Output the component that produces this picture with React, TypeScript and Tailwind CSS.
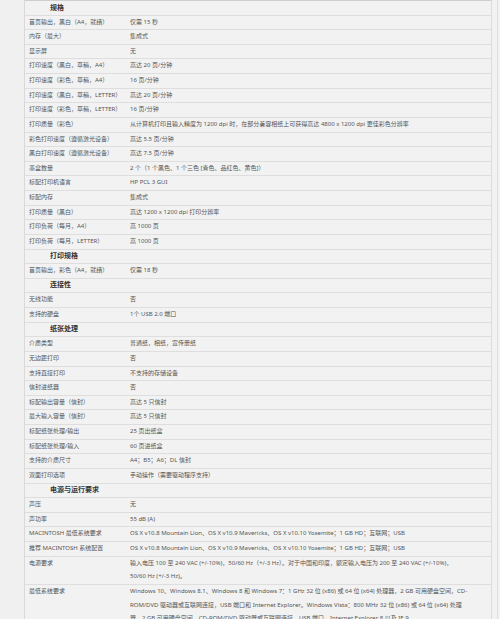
import React from "react";

type Row =
  | { h: string }
  | { l: string; v: string | string[] };

const rows: Row[] = [
  { h: "规格" },
  { l: "首页输出，黑白（A4，就绪）", v: "仅需 15 秒" },
  { l: "内存（最大）", v: "集成式" },
  { l: "显示屏", v: "无" },
  { l: "打印速度（黑白，草稿，A4）", v: "高达 20 页/分钟" },
  { l: "打印速度（彩色，草稿，A4）", v: "16 页/分钟" },
  { l: "打印速度（黑白，草稿，LETTER）", v: "高达 20 页/分钟" },
  { l: "打印速度（彩色，草稿，LETTER）", v: "16 页/分钟" },
  {
    l: "打印质量（彩色）",
    v: "从计算机打印且输入精度为 1200 dpi 时，在部分兼容相纸上可获得高达 4800 x 1200 dpi 更佳彩色分辨率",
  },
  { l: "彩色打印速度（遵循激光设备）", v: "高达 5.5 页/分钟" },
  { l: "黑白打印速度（遵循激光设备）", v: "高达 7.5 页/分钟" },
  { l: "墨盒数量", v: "2 个（1 个黑色、1 个三色 [青色、品红色、黄色]）" },
  { l: "标配打印机语言", v: "HP PCL 3 GUI" },
  { l: "标配内存", v: "集成式" },
  { l: "打印质量（黑白）", v: "高达 1200 x 1200 dpi 打印分辨率" },
  { l: "打印负荷（每月，A4）", v: "高 1000 页" },
  { l: "打印负荷（每月，LETTER）", v: "高 1000 页" },
  { h: "打印规格" },
  { l: "首页输出，彩色（A4，就绪）", v: "仅需 18 秒" },
  { h: "连接性" },
  { l: "无线功能", v: "否" },
  { l: "支持的硬盘", v: "1个 USB 2.0 端口" },
  { h: "纸张处理" },
  { l: "介质类型", v: "普通纸，相纸，宣传册纸" },
  { l: "无边距打印", v: "否" },
  { l: "支持直接打印", v: "不支持的存储设备" },
  { l: "信封进纸器", v: "否" },
  { l: "标配输出容量（信封）", v: "高达 5 只信封" },
  { l: "最大输入容量（信封）", v: "高达 5 只信封" },
  { l: "标配纸张处理/输出", v: "25 页出纸盒" },
  { l: "标配纸张处理/输入", v: "60 页进纸盒" },
  { l: "支持的介质尺寸", v: "A4；B5；A6；DL 信封" },
  { l: "双面打印选项", v: "手动操作（需要驱动程序支持）" },
  { h: "电源与运行要求" },
  { l: "声压", v: "无" },
  { l: "声功率", v: "55 dB (A)" },
  {
    l: "MACINTOSH 最低系统要求",
    v: "OS X v10.8 Mountain Lion、OS X v10.9 Mavericks、OS X v10.10 Yosemite；1 GB HD；互联网；USB",
  },
  {
    l: "推荐 MACINTOSH 系统配置",
    v: "OS X v10.8 Mountain Lion、OS X v10.9 Mavericks、OS X v10.10 Yosemite；1 GB HD；互联网；USB",
  },
  {
    l: "电源要求",
    v: [
      "输入电压 100 至 240 VAC (+/-10%)，50/60 Hz（+/-3 Hz）。对于中国和印度，额定输入电压为 200 至 240 VAC (+/-10%)，",
      "50/60 Hz (+/-3 Hz)。",
    ],
  },
  {
    l: "最低系统要求",
    v: [
      "Windows 10、Windows 8.1、Windows 8 和 Windows 7：1 GHz 32 位 (x86) 或 64 位 (x64) 处理器，2 GB 可用硬盘空间，CD-",
      "ROM/DVD 驱动器或互联网连接，USB 端口和 Internet Explorer。Windows Vista：800 MHz 32 位 (x86) 或 64 位 (x64) 处理",
      "器，2 GB 可用硬盘空间，CD-ROM/DVD 驱动器或互联网连接，USB 端口，Internet Explorer 8 以及 IE 9",
    ],
  },
];

export default function App() {
  return (
    <div
      className="w-[500px] h-[619px] overflow-hidden bg-[#f2f2f2] flex text-[#555] text-[6px]"
      style={{ fontFamily: '"Noto Sans", "Noto Sans CJK SC", sans-serif' }}
    >
      <div className="w-[25px] shrink-0 bg-[#f0f0f0] border-r border-[#d9d9d9]" />
      <div className="w-[467px] shrink-0 border-r border-[#dcdcdc] border-t border-t-[#cfcfcf]">
        {rows.map((r, i) =>
          "h" in r ? (
            <div
              key={i}
              className="h-[14.62px] border-b border-[#dedede] pl-[25px] flex items-center font-bold text-[7px] text-[#333]"
            >
              {r.h}
            </div>
          ) : (
            <div key={i} className="flex border-b border-[#dedede]">
              <div className="w-[102px] shrink-0 pl-[4px] leading-[13.62px] whitespace-nowrap overflow-hidden">
                {r.l}
              </div>
              <div className="flex-1 pl-[3px] leading-[13.62px] whitespace-nowrap overflow-hidden">
                {Array.isArray(r.v)
                  ? r.v.map((t, j) => <div key={j}>{t}</div>)
                  : r.v}
              </div>
            </div>
          )
        )}
      </div>
      <div className="w-[5px] shrink-0" />
      <div className="w-[1px] shrink-0 bg-[#e0e0e0]" />
    </div>
  );
}
